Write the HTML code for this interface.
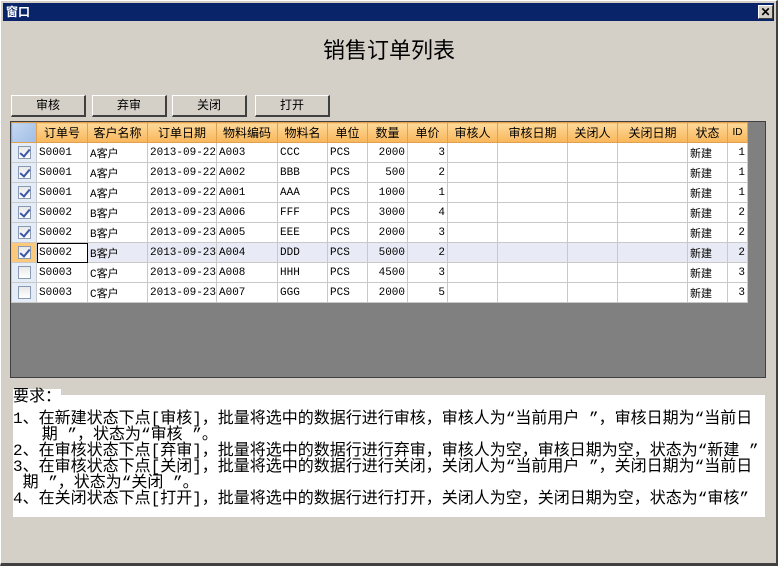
<!DOCTYPE html>
<html><head><meta charset="utf-8"><style>
*{margin:0;padding:0;box-sizing:border-box}
body{width:778px;height:566px;background:#d4d0c8;font-family:"Liberation Sans","WenQuanYi Zen Hei","Noto Sans CJK SC",sans-serif;position:relative;overflow:hidden;font-size:12px;color:#000}
.win{position:absolute;left:0;top:0;width:778px;height:566px;border:1px solid #fff;border-right:2px solid #404040;border-bottom:3px solid #404040}
.title{position:absolute;left:3px;top:3px;width:771px;height:18px;background:#0a246a;color:#fff;font-weight:bold;font-size:12px;line-height:18px;padding-left:3px}
.close{position:absolute;right:5px;top:5px;width:15px;height:14px;background:#d4d0c8;border:1px solid #fff;border-right-color:#404040;border-bottom-color:#404040;color:#000;font-size:12px;font-weight:bold;line-height:12px;text-align:center}
h1{position:absolute;left:0;width:778px;top:36px;text-align:center;font-weight:normal;font-size:22px;line-height:30px}
.btn{position:absolute;top:95px;width:75px;height:22px;border:1px solid #fff;border-right:2px solid #404040;border-bottom:2px solid #404040;background:#d4d0c8;text-align:center;line-height:19px;font-size:12px}
.grid{position:absolute;left:10px;top:121px;width:756px;height:257px;background:#808080;border:1px solid #404040}
table{border-collapse:collapse;position:absolute;left:0;top:0;background:#fff;table-layout:fixed;width:736px}
td,th{height:20px;border:1px solid #c8c8c8;font-size:11px;padding:0 2px;white-space:nowrap;overflow:hidden;font-weight:normal;font-family:"Liberation Mono","WenQuanYi Zen Hei",monospace}
th{background:linear-gradient(#fdd99a,#f8b65a);border-color:#e0a050;text-align:center;font-family:"Liberation Sans","WenQuanYi Zen Hei",sans-serif;font-size:12px;padding:0}
th.c0{background:linear-gradient(135deg,#c5d8f0,#9fbde6)}
td.c0{background:#e4ecf7;text-align:center;padding:0}
.r{text-align:right}
.cb{display:inline-block;width:13px;height:13px;border:1px solid #8a9ab0;background:linear-gradient(#e8e8e8,#fff);vertical-align:middle;position:relative}
.cb.k::after{content:"";position:absolute;left:3px;top:0px;width:4px;height:8px;border:solid #3a56a8;border-width:0 2px 2px 0;transform:rotate(40deg)}
tr.sel td{background:#e8ebf5}
tr.sel td.c0{background:#fcc97a}
.txt{position:absolute;left:13px;top:395px;width:752px;height:122px;background:#fff}
.ln{position:absolute;left:13px;white-space:nowrap;font-size:16px;line-height:16px;font-family:"Liberation Mono","WenQuanYi Zen Hei","Noto Sans CJK SC",monospace}
</style></head><body>
<div class="win"></div>
<div class="title">窗口</div>
<div class="close">✕</div>
<h1>销售订单列表</h1>
<div class="btn" style="left:11px">审核</div>
<div class="btn" style="left:92px">弃审</div>
<div class="btn" style="left:172px">关闭</div>
<div class="btn" style="left:255px">打开</div>
<div class="grid">
<table>
<colgroup><col style="width:25px"><col style="width:51px"><col style="width:60px"><col style="width:69px"><col style="width:61px"><col style="width:50px"><col style="width:40px"><col style="width:40px"><col style="width:40px"><col style="width:50px"><col style="width:70px"><col style="width:50px"><col style="width:70px"><col style="width:40px"><col style="width:20px"></colgroup>
<tr><th class="c0"></th><th>订单号</th><th>客户名称</th><th>订单日期</th><th>物料编码</th><th>物料名</th><th>单位</th><th>数量</th><th>单价</th><th>审核人</th><th>审核日期</th><th>关闭人</th><th>关闭日期</th><th>状态</th><th style="font-size:10px">ID</th></tr>
<tr><td class="c0"><span class="cb k"></span></td><td>S0001</td><td>A客户</td><td>2013-09-22</td><td>A003</td><td>CCC</td><td>PCS</td><td class="r">2000</td><td class="r">3</td><td></td><td></td><td></td><td></td><td>新建</td><td class="r">1</td></tr>
<tr><td class="c0"><span class="cb k"></span></td><td>S0001</td><td>A客户</td><td>2013-09-22</td><td>A002</td><td>BBB</td><td>PCS</td><td class="r">500</td><td class="r">2</td><td></td><td></td><td></td><td></td><td>新建</td><td class="r">1</td></tr>
<tr><td class="c0"><span class="cb k"></span></td><td>S0001</td><td>A客户</td><td>2013-09-22</td><td>A001</td><td>AAA</td><td>PCS</td><td class="r">1000</td><td class="r">1</td><td></td><td></td><td></td><td></td><td>新建</td><td class="r">1</td></tr>
<tr><td class="c0"><span class="cb k"></span></td><td>S0002</td><td>B客户</td><td>2013-09-23</td><td>A006</td><td>FFF</td><td>PCS</td><td class="r">3000</td><td class="r">4</td><td></td><td></td><td></td><td></td><td>新建</td><td class="r">2</td></tr>
<tr><td class="c0"><span class="cb k"></span></td><td>S0002</td><td>B客户</td><td>2013-09-23</td><td>A005</td><td>EEE</td><td>PCS</td><td class="r">2000</td><td class="r">3</td><td></td><td></td><td></td><td></td><td>新建</td><td class="r">2</td></tr>
<tr class="sel"><td class="c0"><span class="cb k"></span></td><td style="background:#fff;outline:1px solid #000;outline-offset:-1px">S0002</td><td>B客户</td><td>2013-09-23</td><td>A004</td><td>DDD</td><td>PCS</td><td class="r">5000</td><td class="r">2</td><td></td><td></td><td></td><td></td><td>新建</td><td class="r">2</td></tr>
<tr><td class="c0"><span class="cb"></span></td><td>S0003</td><td>C客户</td><td>2013-09-23</td><td>A008</td><td>HHH</td><td>PCS</td><td class="r">4500</td><td class="r">3</td><td></td><td></td><td></td><td></td><td>新建</td><td class="r">3</td></tr>
<tr><td class="c0"><span class="cb"></span></td><td>S0003</td><td>C客户</td><td>2013-09-23</td><td>A007</td><td>GGG</td><td>PCS</td><td class="r">2000</td><td class="r">5</td><td></td><td></td><td></td><td></td><td>新建</td><td class="r">3</td></tr>
</table>
</div>
<div class="txt"></div>
<div class="ln" style="top:389px;background:#fff">要求：</div>
<div class="ln" style="top:411px">1、在新建状态下点[审核]，批量将选中的数据行进行审核，审核人为“当前用户 ”，审核日期为“当前日</div>
<div class="ln" style="top:427px">&nbsp;&nbsp;&nbsp;期 ”，状态为“审核 ”。</div>
<div class="ln" style="top:443px">2、在审核状态下点[弃审]，批量将选中的数据行进行弃审，审核人为空，审核日期为空，状态为“新建 ”</div>
<div class="ln" style="top:459px">3、在审核状态下点[关闭]，批量将选中的数据行进行关闭，关闭人为“当前用户 ”，关闭日期为“当前日</div>
<div class="ln" style="top:475px">&nbsp;期 ”，状态为“关闭 ”。</div>
<div class="ln" style="top:491px">4、在关闭状态下点[打开]，批量将选中的数据行进行打开，关闭人为空，关闭日期为空，状态为“审核”</div>
</body></html>
